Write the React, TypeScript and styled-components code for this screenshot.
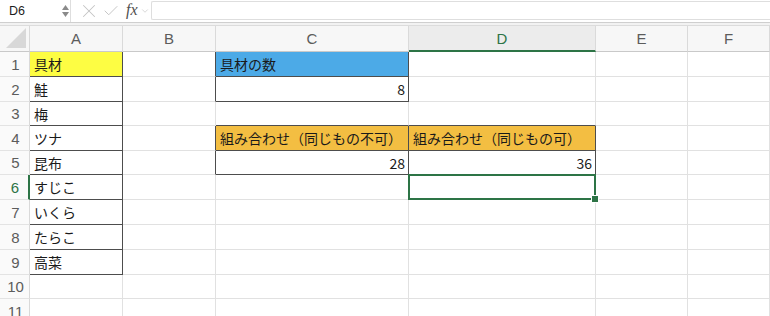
import { FC } from "react";
import styled, { createGlobalStyle, css } from "styled-components";
import { X, Check, ChevronDown } from "lucide-react";

/**
 * Data
 */

const COLUMNS = [
  { key: "A", width: 93 },
  { key: "B", width: 93 },
  { key: "C", width: 193 },
  { key: "D", width: 187 },
  { key: "E", width: 92 },
  { key: "F", width: 82 },
];

const ROW_HEIGHTS = [25, 25, 24, 25, 24, 25, 25, 25, 25, 24, 25];

const YELLOW = "#fdfd43";
const BLUE = "#4caae7";
const ORANGE = "#f3be42";
const GREEN = "#2d7446";

type CellSpec = {
  text?: string;
  fill?: string;
  right?: boolean;
  boxR?: boolean;
  boxB?: boolean;
  selected?: boolean;
};

const boxed = (text: string, fill?: string): CellSpec => ({ text, fill, boxR: true, boxB: true });

const SHEET: Record<number, Record<string, CellSpec>> = {
  1: { A: boxed("具材", YELLOW), B: { boxR: true }, C: boxed("具材の数", BLUE) },
  2: { A: boxed("鮭"), B: { boxR: true }, C: { ...boxed("8"), right: true } },
  3: { A: boxed("梅"), C: { boxB: true }, D: { boxB: true } },
  4: {
    A: boxed("ツナ"),
    B: { boxR: true },
    C: boxed("組み合わせ（同じもの不可）", ORANGE),
    D: boxed("組み合わせ（同じもの可）", ORANGE),
  },
  5: {
    A: boxed("昆布"),
    B: { boxR: true },
    C: { ...boxed("28"), right: true },
    D: { ...boxed("36"), right: true },
  },
  6: { A: boxed("すじこ"), D: { selected: true } },
  7: { A: boxed("いくら") },
  8: { A: boxed("たらこ") },
  9: { A: boxed("高菜") },
};

const ACTIVE_COL = "D";
const ACTIVE_ROW = 6;

/**
 * Styles
 */

const GlobalStyle = createGlobalStyle`
  html, body {
    margin: 0;
    padding: 0;
    background: #ffffff;
    overflow: hidden;
  }
  * {
    box-sizing: border-box;
  }
`;

const Window = styled.div`
  width: 770px;
  height: 316px;
  overflow: hidden;
  display: flex;
  flex-direction: column;
  background: #ffffff;
  font-family: "Noto Sans CJK JP", "Noto Sans", sans-serif;
`;

const Toolbar = styled.div`
  height: 22px;
  display: flex;
  align-items: center;
  flex-shrink: 0;
`;

const NameBox = styled.div`
  width: 62px;
  height: 22px;
  padding-left: 9px;
  display: flex;
  align-items: center;
  font-family: "Liberation Sans", Arial, sans-serif;
  font-size: 12.5px;
  color: #1d1d1d;
`;

const Spinner = styled.div`
  width: 7px;
  display: flex;
  flex-direction: column;
  gap: 2px;
  margin-right: 1px;
`;

const Divider = styled.div`
  width: 1px;
  height: 22px;
  background: #dedede;
`;

const ToolIcons = styled.div`
  display: flex;
  align-items: center;
  gap: 2px;
  padding: 0 1px 0 7px;
  color: #c4c4c4;
`;

const Fx = styled.span`
  font-family: "Liberation Serif", "Times New Roman", serif;
  font-style: italic;
  font-size: 16px;
  color: #505050;
  margin-left: 4px;
  margin-top: -2px;
`;

const FormulaInput = styled.div`
  flex: 1;
  height: 19px;
  margin-top: -2px;
  border: 1px solid #dedede;
  border-right: none;
  border-radius: 2px 0 0 2px;
  background: #ffffff;
`;

const Separator = styled.div`
  height: 4px;
  flex-shrink: 0;
  border-top: 1px solid #cfcfcf;
  border-bottom: 1px solid #dcdcdc;
  background: #f2f2f2;
`;

const Grid = styled.div<{ $cols: string; $rows: string }>`
  display: grid;
  grid-template-columns: ${({ $cols }) => $cols};
  grid-template-rows: ${({ $rows }) => $rows};
`;

const Corner = styled.div`
  position: relative;
  background: #f7f7f7;
  border-right: 1px solid #d9d9d9;
  border-bottom: 1px solid #c9c9c9;

  &::after {
    content: "";
    position: absolute;
    right: 3px;
    bottom: 3px;
    width: 20px;
    height: 20px;
    background: #d8d8d8;
    clip-path: polygon(100% 0, 100% 100%, 0 100%);
  }
`;

const ColHeader = styled.div<{ $active?: boolean }>`
  display: flex;
  align-items: center;
  justify-content: center;
  background: ${({ $active }) => ($active ? "#ececec" : "#f7f7f7")};
  border-right: 1px solid #dadada;
  border-bottom: ${({ $active }) => ($active ? `2px solid ${GREEN}` : "1px solid #c9c9c9")};
  padding-top: ${({ $active }) => ($active ? "1px" : "0")};
  font-family: "Liberation Sans", Arial, sans-serif;
  font-size: 15px;
  color: ${({ $active }) => ($active ? GREEN : "#5c5c5c")};
`;

const RowHeader = styled.div<{ $active?: boolean }>`
  display: flex;
  align-items: center;
  justify-content: center;
  padding-left: 2px;
  background: #fafafa;
  border-right: ${({ $active }) => ($active ? `2px solid ${GREEN}` : "1px solid #d9d9d9")};
  border-bottom: 1px solid #e3e3e3;
  font-family: "Liberation Sans", Arial, sans-serif;
  font-size: 15px;
  color: ${({ $active }) => ($active ? GREEN : "#5c5c5c")};
`;

const Cell = styled.div<{
  $fill?: string;
  $right?: boolean;
  $boxR?: boolean;
  $boxB?: boolean;
  $selected?: boolean;
}>`
  position: relative;
  display: flex;
  align-items: center;
  justify-content: ${({ $right }) => ($right ? "flex-end" : "flex-start")};
  padding: 0 3px 0 4px;
  background: ${({ $fill }) => $fill ?? "#ffffff"};
  border-right: 1px solid ${({ $boxR }) => ($boxR ? "#4d4d4d" : "#e1e1e1")};
  border-bottom: 1px solid ${({ $boxB }) => ($boxB ? "#4d4d4d" : "#e1e1e1")};
  font-size: 14px;
  color: #1a1a1a;
  white-space: nowrap;

  ${({ $selected }) =>
    $selected &&
    css`
      &::after {
        content: "";
        position: absolute;
        top: -1px;
        left: -1px;
        right: -1px;
        bottom: -1px;
        border: 2px solid ${GREEN};
        pointer-events: none;
      }
      &::before {
        content: "";
        position: absolute;
        right: -4px;
        bottom: -4px;
        width: 6px;
        height: 6px;
        background: ${GREEN};
        border: 1px solid #ffffff;
        z-index: 1;
      }
    `}
`;

/**
 * Component
 */

const SpinnerArrows: FC = () => (
  <Spinner>
    <svg width="7" height="5" viewBox="0 0 7 5">
      <path d="M3.5 0 L7 5 L0 5 Z" fill="#8a8a8a" />
    </svg>
    <svg width="7" height="5" viewBox="0 0 7 5">
      <path d="M0 0 L7 0 L3.5 5 Z" fill="#8a8a8a" />
    </svg>
  </Spinner>
);

const App: FC = () => {
  const cols = `30px ${COLUMNS.map((c) => `${c.width}px`).join(" ")}`;
  const rows = `26px ${ROW_HEIGHTS.map((h) => `${h}px`).join(" ")}`;

  return (
    <>
      <GlobalStyle />
      <Window>
        <Toolbar>
          <NameBox>D6</NameBox>
          <SpinnerArrows />
          <Divider />
          <ToolIcons>
            <X size={22} strokeWidth={1.1} />
            <Check size={18} strokeWidth={1.3} />
            <Fx>fx</Fx>
            <ChevronDown size={10} strokeWidth={1.6} />
          </ToolIcons>
          <FormulaInput />
        </Toolbar>
        <Separator />

        <Grid $cols={cols} $rows={rows}>
          <Corner />
          {COLUMNS.map((c) => (
            <ColHeader key={c.key} $active={c.key === ACTIVE_COL}>
              {c.key}
            </ColHeader>
          ))}

          {ROW_HEIGHTS.map((_, i) => {
            const r = i + 1;
            const rowSpec = SHEET[r] ?? {};
            return [
              <RowHeader key={`h${r}`} $active={r === ACTIVE_ROW}>
                {r}
              </RowHeader>,
              ...COLUMNS.map((c) => {
                const spec = rowSpec[c.key] ?? {};
                return (
                  <Cell
                    key={`${c.key}${r}`}
                    $fill={spec.fill}
                    $right={spec.right}
                    $boxR={spec.boxR}
                    $boxB={spec.boxB}
                    $selected={spec.selected}
                  >
                    {spec.text}
                  </Cell>
                );
              }),
            ];
          })}
        </Grid>
      </Window>
    </>
  );
};

export default App;
